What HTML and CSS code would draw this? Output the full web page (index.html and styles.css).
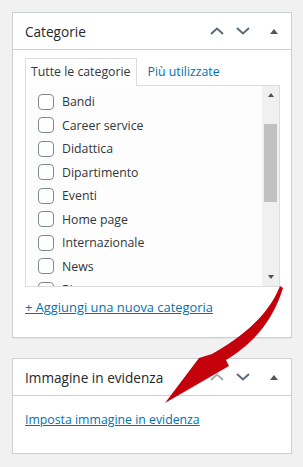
FILE: index.html
```html
<!DOCTYPE html>
<html lang="it">

<head>
  <meta charset="UTF-8">
  <meta name="viewport" content="width=device-width, initial-scale=1.0">
  <title>Categorie</title>
  <link rel="stylesheet" href="styles.css">
</head>

<body>
  <div class="postbox">
    <div class="postbox-header">
      <h2>Categorie</h2>
      <div class="handle-actions">
        <span class="handle-btn">
          <svg width="14" height="8" viewBox="0 0 14 8"><path d="M1 7 L7 1.5 L13 7" fill="none" stroke="currentColor" stroke-width="2"/></svg>
        </span>
        <span class="handle-btn">
          <svg width="14" height="8" viewBox="0 0 14 8"><path d="M1 1 L7 6.5 L13 1" fill="none" stroke="currentColor" stroke-width="2"/></svg>
        </span>
        <span class="handle-btn toggle">
          <svg width="8" height="5" viewBox="0 0 8 5"><path d="M0 5 L4 0 L8 5 Z" fill="currentColor"/></svg>
        </span>
      </div>
    </div>
    <div class="inside">
      <ul class="category-tabs">
        <li class="tabs">Tutte le categorie</li>
        <li><a href="#">Più utilizzate</a></li>
      </ul>
      <div class="tabs-panel">
        <ul class="categorychecklist">
          <li><span class="check"></span>Bandi</li>
          <li><span class="check"></span>Career service</li>
          <li><span class="check"></span>Didattica</li>
          <li><span class="check"></span>Dipartimento</li>
          <li><span class="check"></span>Eventi</li>
          <li><span class="check"></span>Home page</li>
          <li><span class="check"></span>Internazionale</li>
          <li><span class="check"></span>News</li>
          <li><span class="check"></span>Ricerca</li>
        </ul>
        <div class="scrollbar">
          <span class="arrow up"></span>
          <span class="thumb"></span>
          <span class="arrow down"></span>
        </div>
      </div>
      <p class="add-new"><a href="#">+ Aggiungi una nuova categoria</a></p>
    </div>
  </div>

  <div class="postbox second">
    <div class="postbox-header">
      <h2>Immagine in evidenza</h2>
      <div class="handle-actions">
        <span class="handle-btn faded">
          <svg width="14" height="8" viewBox="0 0 14 8"><path d="M1 7 L7 1.5 L13 7" fill="none" stroke="currentColor" stroke-width="2"/></svg>
        </span>
        <span class="handle-btn">
          <svg width="14" height="8" viewBox="0 0 14 8"><path d="M1 1 L7 6.5 L13 1" fill="none" stroke="currentColor" stroke-width="2"/></svg>
        </span>
        <span class="handle-btn toggle">
          <svg width="8" height="5" viewBox="0 0 8 5"><path d="M0 5 L4 0 L8 5 Z" fill="currentColor"/></svg>
        </span>
      </div>
    </div>
    <div class="inside thumb-box">
      <a href="#">Imposta immagine in evidenza</a>
    </div>
  </div>

  <svg class="pointer" width="303" height="467" viewBox="0 0 303 467">
    <path d="M280 286 C272 306 255 330 212 354 L199 358 L165 403 L229 366 L226 360 C255 343 274 318 283 288 Z" fill="#c4000c"/>
  </svg>
</body>

</html>
```

FILE: styles.css
```css
body {
  font-family: 'Open Sans', 'Noto Sans', sans-serif;
  background-color: #f1f1f1;
  margin: 12px 11px 0 12px;
  color: #32373c;
}

a {
  color: #0073aa;
}

.postbox {
  background-color: #fff;
  border: 1px solid #ccd0d4;
  box-shadow: 0 1px 1px rgba(0, 0, 0, 0.04);
}

.postbox.second {
  margin-top: 20px;
}

.postbox-header {
  display: flex;
  align-items: center;
  justify-content: space-between;
  height: 36px;
  border-bottom: 1px solid #ccd0d4;
  padding-left: 12px;
}

.postbox-header h2 {
  margin: 0;
  font-size: 13.6px;
  font-weight: 400;
  color: #23282d;
}

.handle-actions {
  display: flex;
  margin-right: 4px;
}

.handle-btn {
  width: 26px;
  height: 36px;
  display: flex;
  align-items: center;
  justify-content: center;
  color: #5b6a79;
}

.handle-btn.faded {
  color: #a7aaad;
}

.handle-btn.toggle {
  margin-left: 5px;
  color: #50575e;
}

.inside {
  padding: 8px 11px 0 12px;
}

.category-tabs {
  display: flex;
  list-style: none;
  margin: 0 0 -1px;
  padding: 0;
  font-size: 12.3px;
  line-height: 26px;
}

.category-tabs li {
  padding: 0 5px;
  border: 1px solid transparent;
  border-bottom: none;
  margin-right: 5px;
}

.category-tabs li a {
  text-decoration: none;
}

.category-tabs li.tabs {
  border-color: #dcdcde;
  background-color: #fff;
  position: relative;
  z-index: 1;
  height: 27px;
  color: #32373c;
}

.tabs-panel {
  display: flex;
  height: 200px;
  border: 1px solid #dcdcde;
  background-color: #fdfdfd;
  overflow: hidden;
}

.categorychecklist {
  flex: 1;
  list-style: none;
  margin: 0;
  padding: 4px 0 0 12px;
  font-size: 12.3px;
}

.categorychecklist li {
  display: flex;
  align-items: center;
  height: 23.5px;
}

.check {
  width: 14px;
  height: 14px;
  border: 1px solid #7e8993;
  border-radius: 4px;
  background-color: #fff;
  margin-right: 8px;
  flex-shrink: 0;
}

.scrollbar {
  width: 17px;
  background-color: #f0f0f0;
  display: flex;
  flex-direction: column;
  align-items: center;
}

.arrow {
  width: 0;
  height: 0;
  border-left: 3.5px solid transparent;
  border-right: 3.5px solid transparent;
}

.arrow.up {
  border-bottom: 4px solid #505050;
  margin-top: 7px;
}

.arrow.down {
  border-top: 4px solid #505050;
  margin-top: auto;
  margin-bottom: 7px;
}

.thumb {
  width: 13px;
  height: 78px;
  background-color: #c1c1c1;
  margin-top: 27px;
}

.add-new {
  margin: 11px 0 0;
  padding-bottom: 21px;
  font-size: 12.9px;
  line-height: 18px;
}

.thumb-box {
  padding: 15px 12px 24px;
  font-size: 12.3px;
  line-height: 18px;
}

.pointer {
  position: absolute;
  top: 0;
  left: 0;
  pointer-events: none;
}
```
